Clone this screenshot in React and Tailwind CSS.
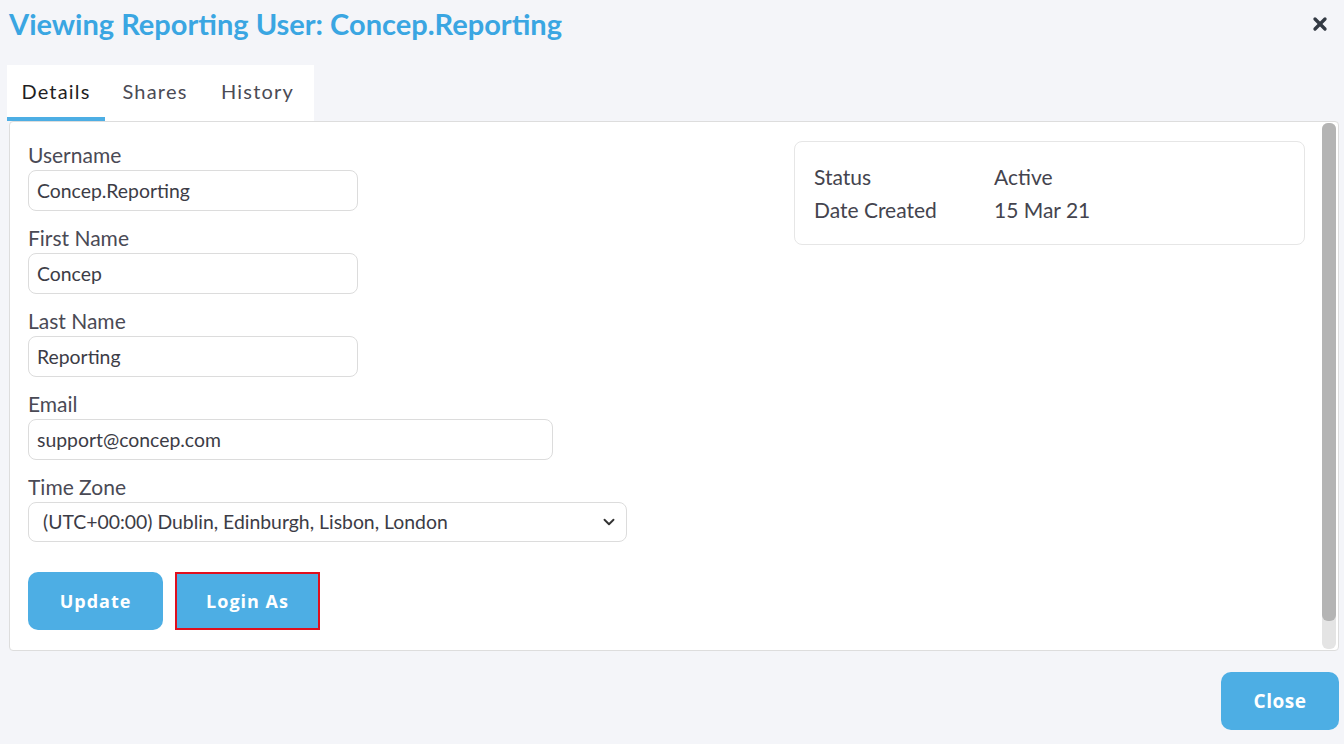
import { ChevronDown, X } from "lucide-react";

const lato = { fontFamily: "Lato, 'Noto Sans', sans-serif" };

function Field({ label, value, width }) {
    return (
        <div className="flex flex-col">
            <label className="text-[21px] leading-[25px] text-[#4a4a55] mb-[3px]">{label}</label>
            <div
                className={`h-[41px] ${width} rounded-[8px] border border-[#dcdcdc] bg-white px-[8px] flex items-center text-[19.4px] text-[#3c3c46]`}
            >
                {value}
            </div>
        </div>
    );
}

export default function App() {
    return (
        <div className="h-[744px] w-[1344px] overflow-hidden bg-[#f4f5f9] relative" style={lato}>
            {/* Header */}
            <div className="flex items-start justify-between pl-[9px] pr-[14px] pt-[5px]">
                <h1 className="text-[29px] leading-[38px] font-bold text-[#3aa6e2]">
                    Viewing Reporting User: Concep.Reporting
                </h1>
                <X className="h-[20px] w-[20px] mt-[9px] text-[#333a44]" strokeWidth={4} />
            </div>

            {/* Tabs */}
            <div className="mt-[22px] ml-[7px] flex w-[307px] bg-white h-[56px]">
                <div className="w-[98px] h-full flex items-center justify-center border-b-[4px] border-[#4daee4] pb-[1px] text-[20px] tracking-[1.2px] text-[#1f1f24]">
                    Details
                </div>
                <div className="w-[100px] h-full flex items-center justify-center pb-[5px] text-[20px] tracking-[1.2px] text-[#4b4b55]">
                    Shares
                </div>
                <div className="w-[109px] h-full flex items-center justify-center pb-[5px] pr-[4px] text-[20px] tracking-[1.2px] text-[#4b4b55]">
                    History
                </div>
            </div>

            {/* Panel */}
            <div className="ml-[9px] w-[1330px] h-[530px] bg-white border border-[#dddddd] rounded-[4px] flex">
                <div className="flex-1 flex pl-[18px] pr-[17px] pt-[20px]">
                    <div className="flex-1 flex flex-col gap-[14px]">
                        <Field label="Username" value="Concep.Reporting" width="w-[330px]" />
                        <Field label="First Name" value="Concep" width="w-[330px]" />
                        <Field label="Last Name" value="Reporting" width="w-[330px]" />
                        <Field label="Email" value="support@concep.com" width="w-[525px]" />
                        <div className="flex flex-col">
                            <label className="text-[21px] leading-[25px] text-[#4a4a55] mb-[3px]">Time Zone</label>
                            <div className="h-[40px] w-[599px] rounded-[8px] border border-[#dcdcdc] bg-white pl-[14px] pr-[8px] flex items-center justify-between text-[19.4px] text-[#3c3c46]">
                                <span>(UTC+00:00) Dublin, Edinburgh, Lisbon, London</span>
                                <ChevronDown className="h-[18px] w-[18px] text-[#333]" strokeWidth={2.5} />
                            </div>
                        </div>
                        <div
                            className="flex gap-[12px] mt-[16px]"
                            style={{ fontFamily: "'Open Sans', sans-serif" }}
                        >
                            <button className="h-[58px] w-[135px] rounded-[10px] bg-[#4daee4] text-white font-bold text-[18px] tracking-[1px]">
                                Update
                            </button>
                            <button className="h-[58px] w-[145px] border-[2px] border-[#e0101e] bg-[#4daee4] text-white font-bold text-[18px] tracking-[1px]">
                                Login As
                            </button>
                        </div>
                    </div>

                    <div className="w-[511px] h-[104px] rounded-[8px] border border-[#e6e6e6] -mt-[1px] pl-[19px] pt-[18px] text-[21px] text-[#44444e]">
                        <div className="flex h-[33px] items-center">
                            <span className="w-[180px]">Status</span>
                            <span>Active</span>
                        </div>
                        <div className="flex h-[33px] items-center">
                            <span className="w-[180px]">Date Created</span>
                            <span>15 Mar 21</span>
                        </div>
                    </div>
                </div>

                {/* Scrollbar */}
                <div className="w-[16px] h-full py-[1px] pr-[2px]">
                    <div className="h-full w-[14px] rounded-[6px] bg-[#e4e4e4] flex flex-col">
                        <div className="h-[498px] w-full rounded-[6px] bg-[#b4b4b4]" />
                    </div>
                </div>
            </div>

            {/* Footer */}
            <div className="flex justify-end pr-[5px] mt-[21px]" style={{ fontFamily: "'Open Sans', sans-serif" }}>
                <button className="h-[58px] w-[118px] rounded-[10px] bg-[#4daee4] text-white font-bold text-[19px] tracking-[0.5px]">
                    Close
                </button>
            </div>
        </div>
    );
}
